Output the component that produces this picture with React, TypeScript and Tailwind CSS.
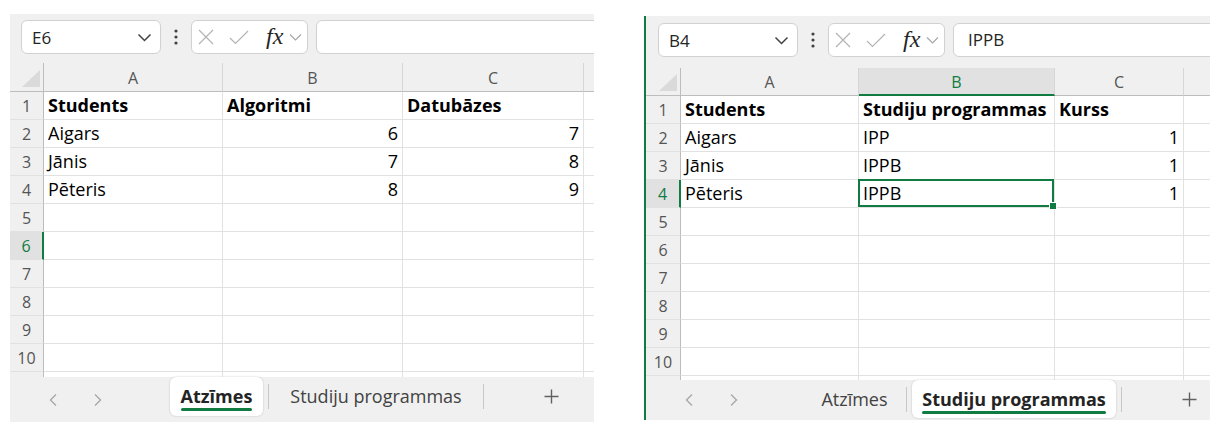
import React from "react";

type CellT = { t: string; bold?: boolean; right?: boolean };

const leftData: CellT[][] = [
  [{ t: "Students", bold: true }, { t: "Algoritmi", bold: true }, { t: "Datubāzes", bold: true }],
  [{ t: "Aigars" }, { t: "6", right: true }, { t: "7", right: true }],
  [{ t: "Jānis" }, { t: "7", right: true }, { t: "8", right: true }],
  [{ t: "Pēteris" }, { t: "8", right: true }, { t: "9", right: true }],
];

const rightData: CellT[][] = [
  [{ t: "Students", bold: true }, { t: "Studiju programmas", bold: true }, { t: "Kurss", bold: true }],
  [{ t: "Aigars" }, { t: "IPP" }, { t: "1", right: true }],
  [{ t: "Jānis" }, { t: "IPPB" }, { t: "1", right: true }],
  [{ t: "Pēteris" }, { t: "IPPB" }, { t: "1", right: true }],
];

function NameBox({ text }: { text: string }) {
  return (
    <div className="w-[140px] h-[34px] shrink-0 bg-white border border-[#d1d1d1] rounded-[6px] flex items-center justify-between pl-[10px] pr-[8px]">
      <span className="text-[17px] text-[#242424] leading-none">{text}</span>
      <svg width="15" height="9" viewBox="0 0 15 9">
        <path d="M1.5 1.5 L7.5 7.5 L13.5 1.5" fill="none" stroke="#424242" strokeWidth="1.5" />
      </svg>
    </div>
  );
}

function Dots() {
  return (
    <svg width="6" height="16" viewBox="0 0 6 16" className="shrink-0">
      <circle cx="3" cy="2" r="1.6" fill="#424242" />
      <circle cx="3" cy="8" r="1.6" fill="#424242" />
      <circle cx="3" cy="14" r="1.6" fill="#424242" />
    </svg>
  );
}

function FxBox() {
  return (
    <div className="w-[117px] h-[34px] shrink-0 bg-white border border-[#d1d1d1] rounded-[6px] flex items-center pl-[6px]">
      <svg width="16" height="16" viewBox="0 0 16 16" className="shrink-0">
        <path d="M1 1 L15 15 M15 1 L1 15" stroke="#b3b3b3" strokeWidth="1.2" fill="none" />
      </svg>
      <svg width="20" height="15" viewBox="0 0 20 15" className="shrink-0 ml-[15px]">
        <path d="M1 8 L6.5 13.5 L19 1" stroke="#b3b3b3" strokeWidth="1.2" fill="none" />
      </svg>
      <span className="ml-[17px] font-['Liberation_Serif',serif] italic text-[24px] leading-none text-[#242424] -mt-[3px]">
        fx
      </span>
      <svg width="13" height="8" viewBox="0 0 13 8" className="shrink-0 ml-[6px]">
        <path d="M1 1.5 L6.5 7 L12 1.5" fill="none" stroke="#a6a6a6" strokeWidth="1.2" />
      </svg>
    </div>
  );
}

function Arrow({ dir }: { dir: "l" | "r" }) {
  return (
    <svg width="10" height="14" viewBox="0 0 10 14" className="shrink-0">
      <path
        d={dir === "l" ? "M8 1.5 L2.5 7 L8 12.5" : "M2 1.5 L7.5 7 L2 12.5"}
        fill="none"
        stroke="#a8a8a8"
        strokeWidth="1.4"
      />
    </svg>
  );
}

function Plus() {
  return (
    <svg width="15" height="15" viewBox="0 0 15 15" className="shrink-0">
      <path d="M7.5 0.5 V14.5 M0.5 7.5 H14.5" stroke="#616161" strokeWidth="1.4" fill="none" />
    </svg>
  );
}

function Tab({ text, active, w }: { text: string; active: boolean; w: string }) {
  return (
    <div
      className={
        w +
        " h-full shrink-0 flex justify-center pt-[8px] " +
        (active ? "bg-white rounded-[6px] shadow-[0_0_2px_rgba(0,0,0,0.22)]" : "")
      }
    >
      <div className="inline-flex flex-col">
        <span
          className={
            "text-[18px] leading-[22px] whitespace-nowrap " +
            (active ? "font-bold text-[#242424]" : "text-[#424242]")
          }
        >
          {text}
        </span>
        {active && <div className="h-[3px] mt-[1px] rounded-full bg-[#107c41]" />}
      </div>
    </div>
  );
}

function Sep() {
  return <div className="w-px h-[25px] bg-[#c7c7c7] shrink-0 self-center mx-[5px]" />;
}

type SheetProps = {
  panelClass: string;
  toolbarClass: string;
  gridClass: string;
  tabBarClass: string;
  tabAreaClass: string;
  navClass: string;
  name: string;
  formula: string;
  rowHeadW: string;
  colW: string[];
  headerH: string;
  data: CellT[][];
  selRow: number;
  selCol: number;
  selCell: boolean;
  active: number;
};

function Sheet(p: SheetProps) {
  const cols = ["A", "B", "C"];
  const rows = Array.from({ length: 11 }, (_, i) => i + 1);
  return (
    <div className={p.panelClass + " bg-[#f0f0f0] overflow-hidden flex flex-col shrink-0 font-['Open_Sans',sans-serif]"}>
      {/* toolbar */}
      <div className={p.toolbarClass + " shrink-0 flex items-start"}>
        <div className="h-[34px] flex items-center">
          <NameBox text={p.name} />
          <div className="ml-[12px] mr-[12px] flex items-center">
            <Dots />
          </div>
          <FxBox />
          <div className="ml-[8px] w-[320px] h-[34px] shrink-0 bg-white border border-[#d1d1d1] rounded-[6px] flex items-center pl-[14px]">
            <span className="text-[17px] text-[#242424]">{p.formula}</span>
          </div>
        </div>
      </div>

      {/* grid */}
      <div className={p.gridClass + " shrink-0 overflow-hidden bg-white"}>
        {/* header row */}
        <div className={p.headerH + " flex bg-[#f0f0f0]"}>
          <div className={p.rowHeadW + " shrink-0 border-r border-b border-[#bdbdbd] flex items-end justify-end pr-[3px] pb-[4px]"}>
            <svg width="18" height="17" viewBox="0 0 18 17">
              <polygon points="18,0 18,17 0,17" fill="#dadada" />
            </svg>
          </div>
          {cols.map((c, i) => {
            const sel = i === p.selCol;
            return (
              <div
                key={c}
                className={
                  p.colW[i] +
                  " shrink-0 flex items-center justify-center pt-[1px] text-[16px] border-r border-r-[#d6d6d6] " +
                  (sel
                    ? "bg-[#e1e1e1] text-[#107c41] border-b-2 border-b-[#107c41]"
                    : "text-[#555555] border-b border-b-[#bdbdbd]")
                }
              >
                {c}
              </div>
            );
          })}
          <div className="flex-1 border-b border-[#bdbdbd]" />
        </div>
        {rows.map((r) => {
          const d = p.data[r - 1];
          const selR = r === p.selRow;
          return (
            <div key={r} className="h-[28px] flex">
              <div
                className={
                  p.rowHeadW +
                  " shrink-0 flex items-center justify-center text-[16px] border-b border-b-[#e1e1e1] " +
                  (selR
                    ? "bg-[#e1e1e1] text-[#107c41] border-r-2 border-r-[#107c41]"
                    : "bg-[#f0f0f0] text-[#555555] border-r border-r-[#bdbdbd]")
                }
              >
                {r <= 10 ? r : ""}
              </div>
              {cols.map((c, i) => {
                const cell = d ? d[i] : undefined;
                const isSel = p.selCell && selR && i === p.selCol;
                return (
                  <div
                    key={c}
                    className={
                      p.colW[i] +
                      " shrink-0 relative flex items-center px-[4px] border-r border-b border-[#e1e1e1] text-[18px] text-[#000] whitespace-nowrap " +
                      (cell && cell.right ? "justify-end" : "justify-start") +
                      (cell && cell.bold ? " font-bold" : "")
                    }
                  >
                    {cell ? cell.t : ""}
                    {isSel && (
                      <div className="absolute -left-[1px] -top-[1px] right-0 bottom-0 border-2 border-[#107c41] z-10 pointer-events-none">
                        <div className="absolute -right-[5px] -bottom-[5px] w-[8px] h-[8px] bg-[#107c41] border border-white" />
                      </div>
                    )}
                  </div>
                );
              })}
              <div className="flex-1 border-b border-[#e1e1e1]" />
            </div>
          );
        })}
      </div>

      {/* tab bar */}
      <div className={p.tabBarClass + " shrink-0 flex items-start"}>
        <div className={p.navClass + " h-full shrink-0 flex items-center pl-[38px] gap-[35px]"}>
          <Arrow dir="l" />
          <Arrow dir="r" />
        </div>
        <div className={p.tabAreaClass + " flex items-stretch"}>
          <Tab text="Atzīmes" active={p.active === 0} w="w-[93px]" />
          <Sep />
          <Tab text="Studiju programmas" active={p.active === 1} w="w-[204px]" />
          <Sep />
          <div className="ml-[55px] flex items-center">
            <Plus />
          </div>
        </div>
      </div>
    </div>
  );
}

export default function App() {
  return (
    <div className="w-[1221px] h-[432px] bg-white flex items-start overflow-hidden">
      <Sheet
        panelClass="ml-[10px] mt-[14px] w-[584px] h-[408px]"
        toolbarClass="h-[49px] pl-[11px] pt-[6px]"
        gridClass="h-[314px]"
        tabBarClass="h-[45px]"
        tabAreaClass="h-[39px]"
        navClass="w-[160px]"
        name="E6"
        formula=""
        rowHeadW="w-[34px]"
        colW={["w-[179px]", "w-[180px]", "w-[181px]"]}
        headerH="h-[29px]"
        data={leftData}
        selRow={6}
        selCol={-1}
        selCell={false}
        active={0}
      />
      <Sheet
        panelClass="ml-[50px] mt-[16px] w-[566px] h-[404px] border-l-2 border-[#107c41]"
        toolbarClass="h-[52px] pl-[12px] pt-[7px]"
        gridClass="h-[312px]"
        tabBarClass="h-[40px]"
        tabAreaClass="h-[38px]"
        navClass="w-[162px]"
        name="B4"
        formula="IPPB"
        rowHeadW="w-[35px]"
        colW={["w-[178px]", "w-[196px]", "w-[129px]"]}
        headerH="h-[28px]"
        data={rightData}
        selRow={4}
        selCol={1}
        selCell={true}
        active={1}
      />
    </div>
  );
}
